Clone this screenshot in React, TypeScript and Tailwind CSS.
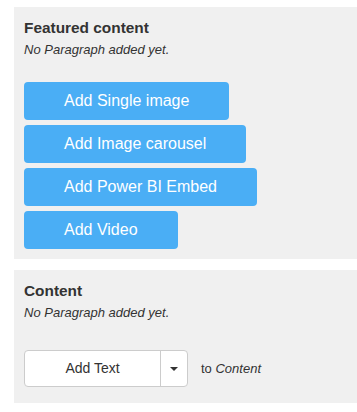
import React from "react";

const font = { fontFamily: '"Liberation Sans", Arial, sans-serif' };

function BlueButton({ label }: { label: string }) {
  return (
    <button className="h-[38px] px-[40px] rounded-[4px] bg-[#4aaef5] text-white text-[16px] leading-[20px] self-start whitespace-nowrap">
      {label}
    </button>
  );
}

export default function App() {
  return (
    <div className="bg-white w-[357px] h-[412px] pt-[7px] pl-[14px]" style={font}>
      <div className="bg-[#f0f0f0] pl-[10px] pt-[11px] pb-[10px] flex flex-col">
        <h2 className="text-[15.4px] leading-[20px] font-bold text-[#333]">Featured content</h2>
        <p className="mt-[3px] text-[13px] leading-[18px] italic text-[#333]">No Paragraph added yet.</p>
        <div className="mt-[23px] flex flex-col gap-[5px]">
          <BlueButton label="Add Single image" />
          <BlueButton label="Add Image carousel" />
          <BlueButton label="Add Power BI Embed" />
          <BlueButton label="Add Video" />
        </div>
      </div>
      <div className="mt-[11px] bg-[#f0f0f0] pl-[10px] pt-[11px] pb-[16px] flex flex-col">
        <h2 className="text-[15.4px] leading-[20px] font-bold text-[#333]">Content</h2>
        <p className="mt-[3px] text-[13px] leading-[18px] italic text-[#333]">No Paragraph added yet.</p>
        <div className="mt-[28px] flex items-center">
          <div className="flex h-[37px] border border-[#ccc] rounded-[4px] bg-white">
            <button className="w-[136px] text-[14px] text-[#333] border-r border-[#ccc]">Add Text</button>
            <button className="w-[26px] flex items-center justify-center">
              <svg width="8" height="4" viewBox="0 0 8 4">
                <path d="M0 0 L8 0 L4 4 Z" fill="#333" />
              </svg>
            </button>
          </div>
          <span className="ml-[13px] text-[13px] text-[#333]">
            to <em>Content</em>
          </span>
        </div>
      </div>
    </div>
  );
}
